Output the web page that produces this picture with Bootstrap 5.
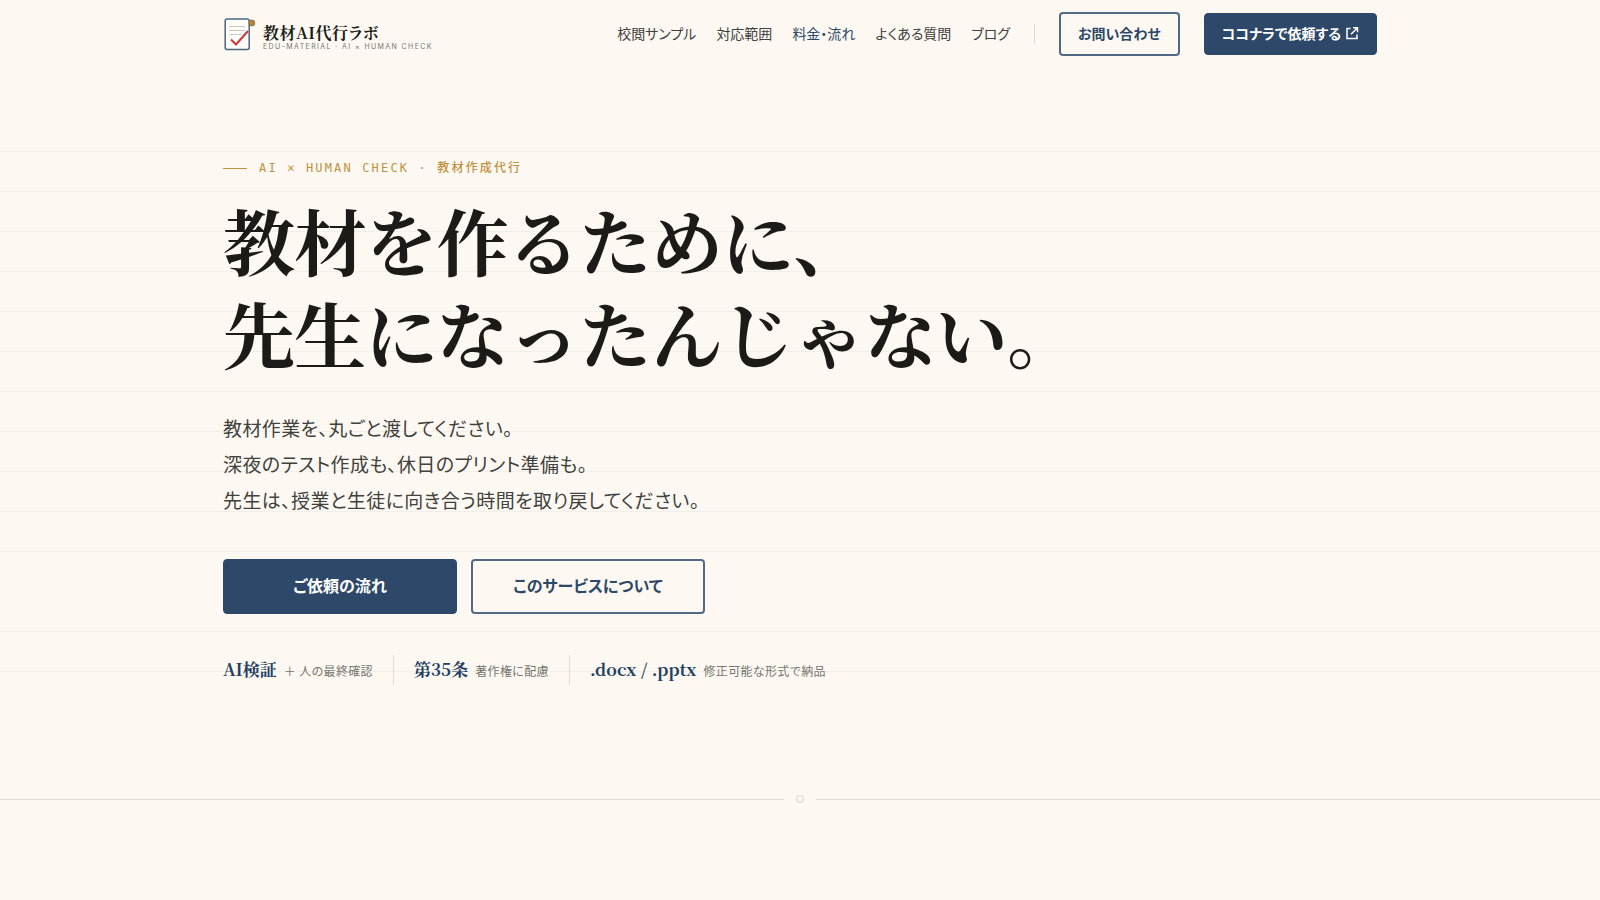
<!DOCTYPE html>
<html lang="ja">
<head>
<meta charset="utf-8">
<meta name="viewport" content="width=device-width, initial-scale=1">
<title>教材AI代行ラボ</title>
<link href="https://cdn.jsdelivr.net/npm/bootstrap@5.3.0/dist/css/bootstrap.min.css" rel="stylesheet">
<style>
:root { --paper:#fdf9f2; --ink:#1c1b18; --soft:#41413e; --navy:#2d4868; --gold:#c0923f; --rule:#dedcd5; }
body { background:var(--paper); color:var(--ink); font-family:"Noto Sans CJK JP",sans-serif; font-feature-settings:"palt"; }
.mincho { font-family:"Noto Serif CJK JP","Noto Serif JP","Liberation Serif","Noto Sans CJK JP",serif; font-weight:700; }
.page-wrap { max-width:1202px; padding-left:24px; padding-right:24px; }
.site-bar { height:68px; }
.brand-link { color:var(--ink); gap:6px; }
.brand-name { font-size:16px; line-height:20px; letter-spacing:.03em; margin-top:6px; }
.brand-sub { font-family:Inter,sans-serif; font-size:7px; line-height:8px; letter-spacing:.2em; color:#77756f; }
.menu { gap:20px; font-size:14px; line-height:20px; margin-bottom:2px; }
.menu a { color:var(--soft); text-decoration:none; white-space:nowrap; }
.menu a.active { color:var(--navy); }
.bar-split { width:1px; height:20px; background:var(--rule); }
.bar-actions { gap:24px; margin-left:24px; }
.btn { --bs-btn-border-radius:4px; --bs-btn-font-weight:700; font-feature-settings:inherit; white-space:nowrap; }
.btn-navy { --bs-btn-color:#fff; --bs-btn-bg:var(--navy); --bs-btn-border-color:var(--navy); --bs-btn-hover-color:#fff; --bs-btn-hover-bg:#203a58; }
.btn-line { --bs-btn-color:var(--navy); --bs-btn-border-color:#526984; --bs-btn-border-width:2px; --bs-btn-hover-color:#fff; --bs-btn-hover-bg:var(--navy); }
.btn-bar { font-size:14px; line-height:20px; padding:9px 17px 11px; }
.btn-bar.btn-line { padding:9px 17px 11px; }
.hero { padding-top:83px; padding-bottom:110px; background:
  repeating-linear-gradient(to bottom,#f1efe9 0 1px,transparent 1px 40px) 0 83px / 100% 401px no-repeat,
  repeating-linear-gradient(to bottom,#f1efe9 0 1px,transparent 1px 40px) 0 563px / 100% 41px no-repeat; }
.eyebrow { font-family:"DejaVu Sans Mono","Noto Sans CJK JP",monospace; font-feature-settings:normal; font-weight:500; font-size:12px; line-height:18px; letter-spacing:.18em; color:var(--gold); gap:12px; margin:8px 0 16px; }
.eyebrow::before { content:""; width:24px; height:1px; background:var(--gold); }
.hero-title { font-size:72px; line-height:93px; letter-spacing:-.01em; font-feature-settings:normal; margin-bottom:31px; }
.lead-copy { font-size:19px; line-height:36px; letter-spacing:.02em; color:var(--soft); margin-bottom:41px; }
.hero-actions { gap:14px; margin-bottom:41px; }
.btn-hero { width:234px; height:55px; font-size:16px; padding:4px 12px 8px; }
.fact { gap:7px; padding:0 20px; line-height:28px; white-space:nowrap; }
.fact:first-child { padding-left:0; }
.fact + .fact { border-left:1px solid var(--rule); }
.fact .mincho { font-size:17px; color:#243f63; }
.fact-note { font-size:12px; letter-spacing:.03em; color:#77756f; }
.divider-row { gap:12px; }
.divider-row span { height:1px; background:var(--rule); }
.divider-row i { width:8px; height:8px; border:1px solid #d3d1ca; border-radius:50%; }
</style>
</head>
<body>
<header class="site-bar">
  <div class="container-fluid page-wrap h-100 d-flex align-items-center">
    <a href="#" class="brand-link d-flex align-items-center text-decoration-none">
      <svg width="34" height="34" viewBox="0 0 34 34" fill="none" aria-hidden="true">
        <rect x="2.200" y="2" width="24" height="30.500" rx="2" fill="#fffdf8" stroke="#4a6483" stroke-width="1.500"/>
        <path d="M6 9.500h16M6 13.500h16M6 17.500h13" stroke="#c9c9c6"/>
        <path d="M8 22.500l5 5L25 14" stroke="#c73836" stroke-width="2"/>
        <circle cx="28.800" cy="6" r="3" fill="#b88a2e" stroke="#6e6642" stroke-width=".8"/>
      </svg>
      <span class="d-flex flex-column">
        <span class="brand-name mincho">教材AI代行ラボ</span>
        <span class="brand-sub">EDU-MATERIAL · AI × HUMAN CHECK</span>
      </span>
    </a>
    <nav class="menu d-flex align-items-center ms-auto">
      <a href="#">校閲サンプル</a>
      <a href="#">対応範囲</a>
      <a href="#" class="active">料金・流れ</a>
      <a href="#">よくある質問</a>
      <a href="#">ブログ</a>
    </nav>
    <div class="bar-actions d-flex align-items-center">
      <div class="bar-split"></div>
      <button type="button" class="btn btn-line btn-bar">お問い合わせ</button>
      <button type="button" class="btn btn-navy btn-bar d-flex align-items-center gap-1">ココナラで依頼する
        <svg width="14" height="14" viewBox="0 0 14 14" fill="none" stroke="currentColor" stroke-width="1.500" aria-hidden="true"><path d="M5.500 2.500H2v10h10V8.500M8 1.800h4.500v4.500M12.500 1.800L6 8.300"/></svg>
      </button>
    </div>
  </div>
</header>
<main>
  <section class="hero">
    <div class="container-fluid page-wrap">
      <p class="eyebrow d-flex align-items-center">AI × HUMAN CHECK · 教材作成代行</p>
      <h1 class="hero-title mincho">教材を作るために、<br>先生になったんじゃない。</h1>
      <p class="lead-copy">教材作業を、丸ごと渡してください。<br>深夜のテスト作成も、休日のプリント準備も。<br>先生は、授業と生徒に向き合う時間を取り戻してください。</p>
      <div class="hero-actions d-flex flex-wrap">
        <button type="button" class="btn btn-navy btn-hero">ご依頼の流れ</button>
        <button type="button" class="btn btn-line btn-hero">このサービスについて</button>
      </div>
      <div class="d-flex flex-wrap">
        <div class="fact d-flex align-items-baseline"><span class="mincho">AI検証</span><span class="fact-note">＋ 人の最終確認</span></div>
        <div class="fact d-flex align-items-baseline"><span class="mincho">第35条</span><span class="fact-note">著作権に配慮</span></div>
        <div class="fact d-flex align-items-baseline"><span class="mincho">.docx / .pptx</span><span class="fact-note">修正可能な形式で納品</span></div>
      </div>
    </div>
  </section>
  <div class="divider-row d-flex align-items-center"><span class="flex-fill"></span><i></i><span class="flex-fill"></span></div>
</main>
<script src="https://cdn.jsdelivr.net/npm/bootstrap@5.3.0/dist/js/bootstrap.bundle.min.js"></script>
</body>
</html>
